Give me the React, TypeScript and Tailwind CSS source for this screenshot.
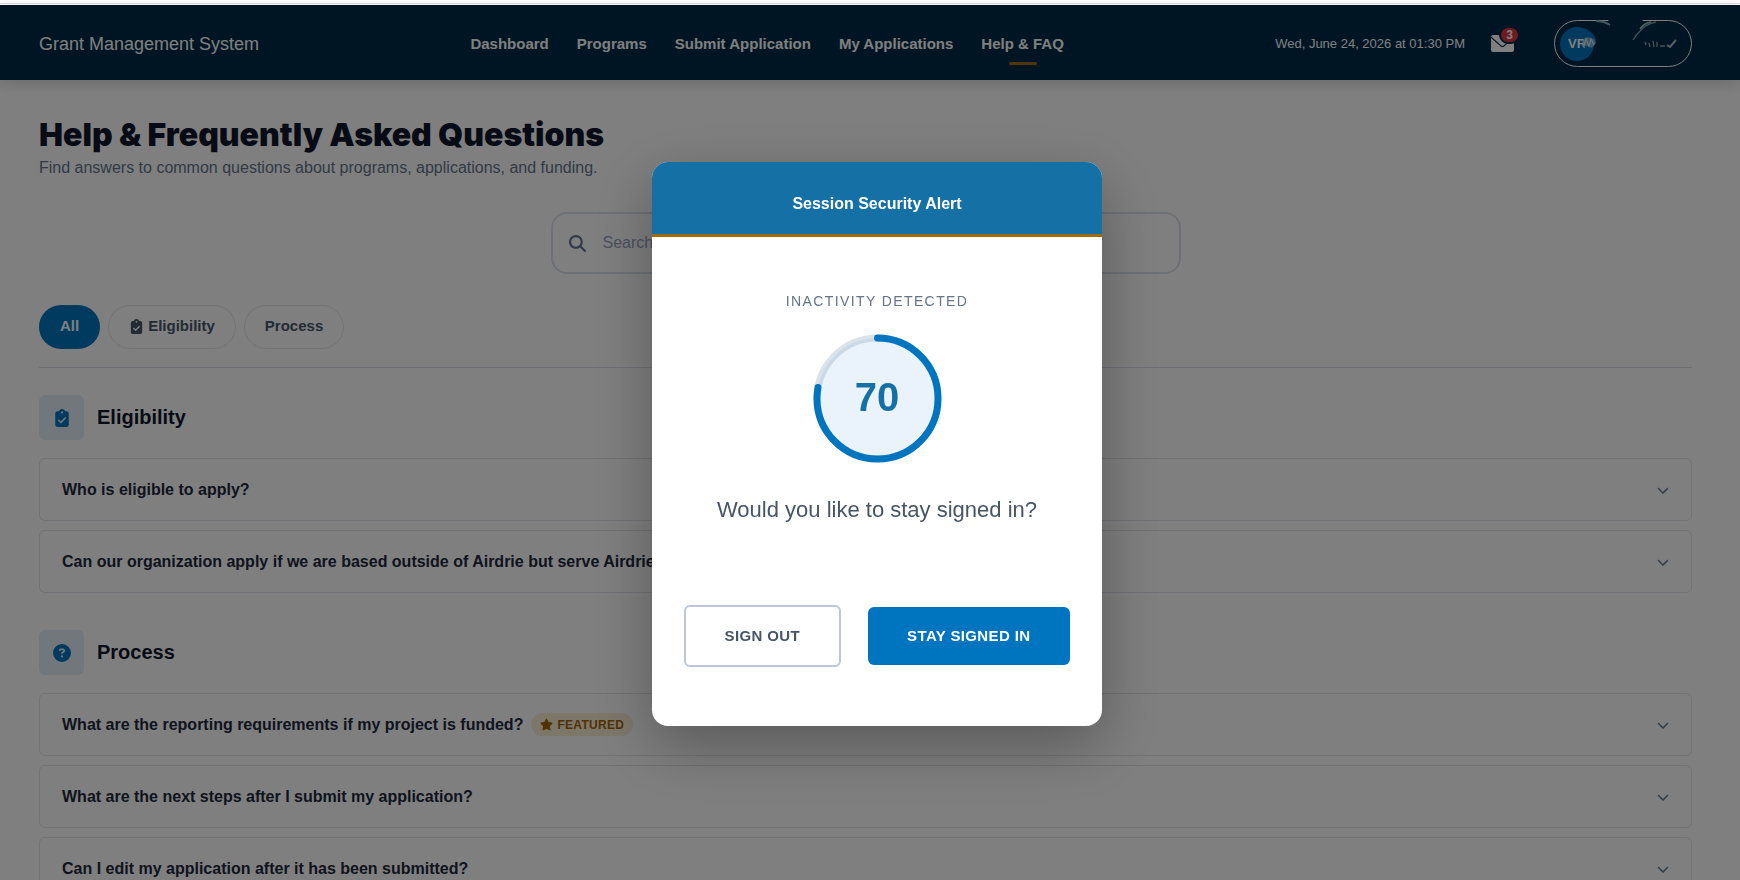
import { useState } from "react";
import type { ReactNode } from "react";
import {
  FaChevronDown,
  FaCircleQuestion,
  FaClipboardCheck,
  FaMagnifyingGlass,
  FaStar,
} from "react-icons/fa6";

const NAV = ["Dashboard", "Programs", "Submit Application", "My Applications", "Help & FAQ"];

type Question = { text: string; featured?: boolean };
type Section = { title: string; icon: ReactNode; questions: Question[] };

const SECTIONS: Section[] = [
  {
    title: "Eligibility",
    icon: <FaClipboardCheck className="size-[18px]" />,
    questions: [
      { text: "Who is eligible to apply?" },
      { text: "Can our organization apply if we are based outside of Airdrie but serve Airdrie residents?" },
    ],
  },
  {
    title: "Process",
    icon: <FaCircleQuestion className="size-[18px]" />,
    questions: [
      { text: "What are the reporting requirements if my project is funded?", featured: true },
      { text: "What are the next steps after I submit my application?" },
      { text: "Can I edit my application after it has been submitted?" },
    ],
  },
];

function EnvelopeIcon() {
  return (
    <svg viewBox="0 0 23 17" className="h-[17px] w-[23px]">
      <rect width="23" height="17" rx="2" fill="currentColor" />
      <path d="M0 2.2 L10 10.9 Q11.5 12 13 10.9 L23 2.2" fill="none" stroke="#002a47" strokeWidth="1.2" />
    </svg>
  );
}

/* Smudged name and caret on the account button */
function AccountSmudge() {
  return (
    <svg viewBox="0 0 138 47" className="absolute -inset-px h-[47px] w-[138px]">
      <defs>
        <filter id="smudge" x="-20%" y="-20%" width="140%" height="140%">
          <feGaussianBlur stdDeviation="0.7" />
        </filter>
      </defs>
      <path d="M53 -1 L90 -1 L86 3 L57 3 Z" fill="#002a47" />
      <g filter="url(#smudge)">
        <path d="M30 8 Q40 12 42 20 Q41 28 31 38 Z" fill="#0075bf" />
        <path d="M28 20 L33 17 L40 19 L42 23 L38 28 L33 26 L29 27 Z" fill="#9cc9dc" fillOpacity="0.7" />
        <path d="M30 26 L32 19 L35 26 L37 19 L40 25" fill="none" stroke="#dceaf0" strokeWidth="1.2" />
        <path d="M42 1 Q50 1 56 5" fill="none" stroke="#7fb3bd" strokeWidth="1.8" />
        <path d="M79 20 Q82 15 87 10 Q92 4 102 2" fill="none" stroke="#6f9fac" strokeWidth="1.4" />
        <path d="M86 9 Q90 3 97 2" fill="none" stroke="#9fc4cc" strokeWidth="1.4" />
        <path
          d="M91 22 L92 25 M95 23 L96 27 M99 21 L100 27 M103 22 L103 27 M106 26 L111 26"
          fill="none"
          stroke="#8fa9b3"
          strokeWidth="1.3"
        />
        <path d="M113 25 L116 27 L122 20" fill="none" stroke="#b5bec4" strokeWidth="2" />
      </g>
    </svg>
  );
}

function Header() {
  return (
    <header className="relative z-10 flex h-[75px] items-center justify-between bg-[#002a47] pt-[2px] pr-12 pl-[39px] text-white shadow-[0_4px_14px_rgba(0,0,0,0.15)]">
      <a href="#home" className="text-lg leading-6 whitespace-nowrap">
        Grant Management System
      </a>
      <nav className="flex gap-7 text-[15px] leading-5 font-bold whitespace-nowrap">
        {NAV.map((item) => (
          <a key={item} href="#nav" className="relative">
            {item}
            {item === "Help & FAQ" && (
              <span className="absolute top-full left-1/2 mt-2 h-[3px] w-7 -translate-x-1/2 rounded-sm bg-[#a16c0c]" />
            )}
          </a>
        ))}
      </nav>
      <div className="flex items-center">
        <time className="text-[13px] leading-5 font-medium whitespace-nowrap">
          Wed, June 24, 2026 at 01:30 PM
        </time>
        <button type="button" aria-label="Messages" className="relative ml-[26px]">
          <EnvelopeIcon />
          <span className="absolute -top-[9px] left-2 flex h-[18px] w-[21px] items-center justify-center rounded-full border-2 border-[#002a47] bg-[#dc3545] text-xs leading-none font-bold">
            3
          </span>
        </button>
        <button
          type="button"
          aria-label="Account"
          className="relative ml-10 flex h-[47px] w-[138px] items-center rounded-full border border-white pl-[5px]"
        >
          <span className="flex size-[34px] items-center justify-center rounded-full bg-[#0075bf] text-[13px] font-bold">
            VR
          </span>
          <AccountSmudge />
        </button>
      </div>
    </header>
  );
}

function QuestionRow({ question }: { question: Question }) {
  return (
    <button
      type="button"
      className="flex h-[63px] w-full items-center justify-between rounded-md border border-[#e2e4ec] bg-white px-[22px] text-left"
    >
      <span className="flex items-center gap-2 text-base font-bold text-[#1e293b]">
        {question.text}
        {question.featured && (
          <span className="flex h-[23px] items-center gap-1 rounded-full bg-[#fbefd5] px-[9px] text-xs tracking-wide text-[#a16207]">
            <FaStar className="size-[13px]" />
            FEATURED
          </span>
        )}
      </span>
      <FaChevronDown className="size-3 text-[#64748b]" />
    </button>
  );
}

function SessionDialog() {
  const radius = 61;
  const length = 2 * Math.PI * radius;
  const remaining = 70;
  return (
    <div className="fixed inset-x-0 top-[5px] bottom-0 z-20 flex items-center justify-center bg-black/50 pt-[3px] pl-[14px]">
      <div
        role="dialog"
        aria-labelledby="session-title"
        className="w-[450px] overflow-hidden rounded-2xl bg-white text-center shadow-[0_20px_60px_rgba(0,0,0,0.3)]"
      >
        <div className="border-b-[3px] border-[#a16c0c] bg-[#1571a5] px-6 pt-[30px] pb-[18px]">
          <h2 id="session-title" className="text-base leading-6 font-bold text-white">
            Session Security Alert
          </h2>
        </div>
        <div className="px-8 pt-[54px] pb-[59px]">
          <p className="text-sm leading-5 tracking-widest text-[#64748b]">INACTIVITY DETECTED</p>
          <div className="relative mx-auto mt-[23px] size-[129px]">
            <svg viewBox="0 0 130 130" className="size-full -rotate-90">
              <circle cx="65" cy="65" r={radius} fill="#eaf3fb" />
              <circle
                cx="65"
                cy="65"
                r={radius}
                fill="none"
                stroke="#849eb9"
                strokeOpacity="0.3"
                strokeWidth="7"
              />
              <circle
                cx="65"
                cy="65"
                r={radius}
                fill="none"
                stroke="#0075bf"
                strokeWidth="7"
                strokeLinecap="round"
                strokeDasharray={`${(length * remaining) / 90} ${length}`}
              />
            </svg>
            <span className="absolute inset-0 flex items-center justify-center pb-[3px] text-[40px] leading-none font-bold text-[#1571a5]">
              {remaining}
            </span>
          </div>
          <p className="mt-[31px] text-[22px] leading-8 text-[#475569]">Would you like to stay signed in?</p>
          <div className="mt-[79px] flex items-center justify-center gap-[27px] text-[15px] leading-5 font-bold tracking-wide">
            <button
              type="button"
              className="h-[62px] w-[157px] rounded-md border-2 border-[#bcc8da] text-[#475569]"
            >
              SIGN OUT
            </button>
            <button type="button" className="h-[58px] w-[203px] rounded-md bg-[#0075bf] text-white">
              STAY SIGNED IN
            </button>
          </div>
        </div>
      </div>
    </div>
  );
}

export default function App() {
  const [query, setQuery] = useState("");
  return (
    <div className="h-screen overflow-hidden bg-white font-['Liberation_Sans',Arial,sans-serif]">
      <div className="h-[5px] bg-white pt-[3px]">
        <div className="h-px bg-[#dcdcdc]" />
      </div>
      <Header />
      <main className="pt-9 pr-12 pl-[39px]">
        <h1 className="font-['Inter',sans-serif] text-[32px] leading-[38px] font-black text-[#0f172a]">
          Help &amp; Frequently Asked Questions
        </h1>
        <p className="mt-[2px] text-base leading-6 text-[#64748b]">
          Find answers to common questions about programs, applications, and funding.
        </p>
        <label className="mx-auto mt-8 flex h-[62px] w-[630px] items-center gap-[17px] rounded-2xl border-2 border-[#dbe1ea] bg-white px-4">
          <FaMagnifyingGlass className="size-[17px] shrink-0 text-[#64748b]" />
          <input
            aria-label="Search questions"
            value={query}
            onChange={(e) => setQuery(e.target.value)}
            placeholder="Search questions..."
            className="w-full text-base text-[#1e293b] outline-none placeholder:text-[#94a3b8]"
          />
        </label>
        <div className="mt-[31px] flex gap-2 border-b border-[#dcdfe6] pb-[18px] text-[15px] font-bold text-[#475569]">
          <button type="button" className="h-11 rounded-full bg-[#0075bf] px-[21px] pb-[2px] text-white">
            All
          </button>
          <button
            type="button"
            className="flex h-11 items-center gap-1 rounded-full border border-[#e2e4ec] px-5 pb-[2px]"
          >
            <FaClipboardCheck className="size-[15px]" />
            Eligibility
          </button>
          <button type="button" className="h-11 rounded-full border border-[#e2e4ec] px-5 pb-[2px]">
            Process
          </button>
        </div>
        <div className="mt-[27px] flex flex-col gap-[37px]">
          {SECTIONS.map((section) => (
            <section key={section.title}>
              <div className="flex items-center gap-[13px]">
                <span className="flex size-[45px] items-center justify-center rounded-md bg-[#e3eef7] text-[#0075bf]">
                  {section.icon}
                </span>
                <h2 className="pb-[2px] text-xl leading-7 font-bold text-[#0f172a]">{section.title}</h2>
              </div>
              <div className="mt-[18px] flex flex-col gap-[9px]">
                {section.questions.map((question) => (
                  <QuestionRow key={question.text} question={question} />
                ))}
              </div>
            </section>
          ))}
        </div>
      </main>
      <SessionDialog />
    </div>
  );
}
